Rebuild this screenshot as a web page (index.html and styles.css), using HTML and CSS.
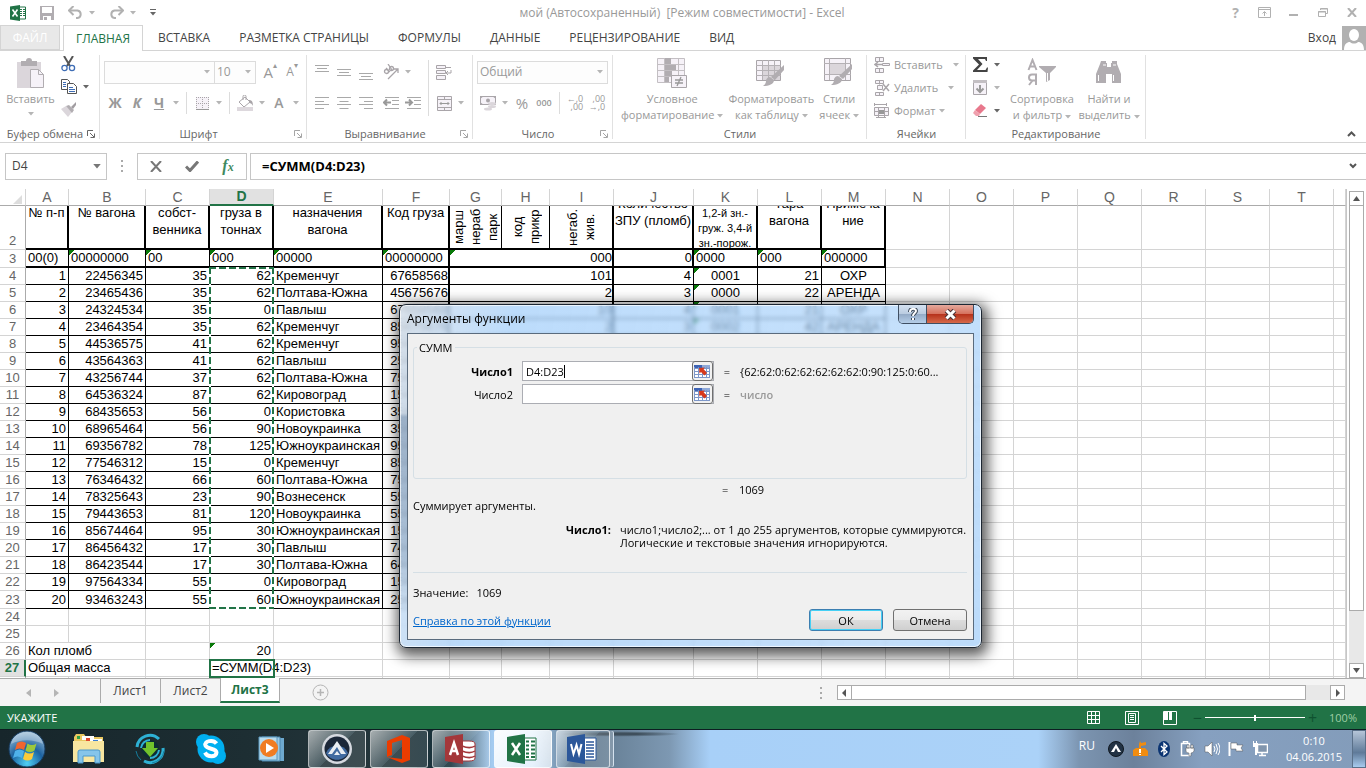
FILE: index.html
```html
<!DOCTYPE html>
<html lang="ru">
  <head>
    <meta charset="utf-8">
    <title>мой - Excel</title>
    <link rel="stylesheet" href="styles.css">
  </head>

  <body>
    <svg class="defs" width="0" height="0" aria-hidden="true">
      <symbol id="arrow" viewBox="0 0 6 4"><path d="M0 0h6L3 3.5z" fill="currentColor"/></symbol>
      <symbol id="launch" viewBox="0 0 8 8"><path d="M.5 6V.5H6M3 3l4 4M7.500 3.500v4h-4" fill="none" stroke="currentColor"/></symbol>
      <symbol id="al-l" viewBox="0 0 14 12"><path d="M0 .5h14M0 4.500h9M0 7.500h14M0 11.500h9" stroke="#a9a9a9"/></symbol>
      <symbol id="al-c" viewBox="0 0 14 12"><path d="M0 .5h14M2.500 4.500h9M0 7.500h14M2.500 11.500h9" stroke="#a9a9a9"/></symbol>
      <symbol id="al-r" viewBox="0 0 14 12"><path d="M0 .5h14M5 4.500h9M0 7.500h14M5 11.500h9" stroke="#a9a9a9"/></symbol>
      <symbol id="ref" viewBox="0 0 17 14">
        <path d="M0 1h16v13H0z" fill="#fff"/>
        <path d="M0 1h8v3H0z" fill="#3d63b5"/>
        <path d="M8 1h8v3H8z" fill="#8fa9d8"/>
        <path d="M0 4.500h16M0 7.500h16M0 10.500h16M0 13.500h16M.5 3v11M4.500 3v11M8.500 3v11M12.500 3v11M15.500 3v11" stroke="#7d97c9"/>
        <path d="M5 4l6-.5-1.500 1.500L13 9l-2.500 2.500L7 8 5.500 9.500z" fill="#d8391c"/>
      </symbol>
      <symbol id="brush" viewBox="0 0 22 22">
        <path d="M21 0v5l-9 10-4-3z" fill="#b1adb1"/>
        <path d="M7 12l4 3c0 4-5 6-11 6 3-2 3-4 3-6 1-2 2-3 4-3z" fill="#b1adb1"/>
      </symbol>
    </svg>

    <div class="window">
      <header class="titlebar">
        <div class="quick">
          <svg width="16" height="16" viewBox="0 0 16 16"><path d="M8 2h7.500v12H8z" fill="#fff" stroke="#217346"/><path d="M10 4.500h2M13 4.500h2M10 6.500h2M13 6.500h2M10 8.500h2M13 8.500h2M10 10.500h2M13 10.500h2" stroke="#217346"/><path d="M0 1.500L10 0v16L0 14.500z" fill="#217346"/><path d="M2.500 4.500l5 7M7.500 4.500l-5 7" stroke="#fff" stroke-width="1.600"/></svg>
          <button aria-label="Сохранить"><svg width="14" height="14" viewBox="0 0 14 14"><path d="M0 0h14v14H0z" fill="#b1adb1"/><path d="M2 1h10v6H2z" fill="#fff"/><path d="M3 10h8v4H3z" fill="#fff"/><path d="M4 11h3v3H4z" fill="#b1adb1"/></svg></button>
          <button class="with-arrow" aria-label="Отменить"><svg width="15" height="13" viewBox="0 0 15 13"><path d="M2 4.500h7.500a3.800 3.800 0 0 1 0 7.500H8" fill="none" stroke="#b1b1b1" stroke-width="2"/><path d="M5.500 0L1 4.500 5.500 9" fill="none" stroke="#b1b1b1" stroke-width="2"/></svg><svg class="ar"><use href="#arrow"/></svg></button>
          <button class="with-arrow" aria-label="Вернуть"><svg width="15" height="13" viewBox="0 0 15 13"><path d="M13 4.500H5.500a3.800 3.800 0 0 0 0 7.500H7" fill="none" stroke="#b1b1b1" stroke-width="2"/><path d="M9.500 0L14 4.500 9.500 9" fill="none" stroke="#b1b1b1" stroke-width="2"/></svg><svg class="ar"><use href="#arrow"/></svg></button>
          <button aria-label="Настройка панели"><svg width="6" height="7" viewBox="0 0 6 7"><path d="M0 .5h6" stroke="#666"/><path d="M0 3h6L3 6.500z" fill="#666"/></svg></button>
        </div>
        <h1>мой (Автосохраненный)  [Режим совместимости] - Excel</h1>
        <div class="caption">
          <button aria-label="Справка"><b>?</b></button>
          <button aria-label="Параметры ленты"><svg width="13" height="11" viewBox="0 0 13 11"><path d="M.5.500h12v10H.5zM.5 2.500h12M6.500 9V5M4.500 6.500l2-2 2 2" fill="none" stroke="#b1b1b1"/></svg></button>
          <button aria-label="Свернуть"><svg width="9" height="9" viewBox="0 0 9 9"><path d="M0 7h9" stroke="#b1b1b1" stroke-width="2"/></svg></button>
          <button aria-label="Восстановить"><svg width="10" height="9" viewBox="0 0 10 9"><path d="M2.500 2V.5h7v5H8M.5 3.500h7v5h-7zM0 4h8M2.500 1h7" fill="none" stroke="#b1b1b1"/></svg></button>
          <button aria-label="Закрыть"><svg width="10" height="9" viewBox="0 0 10 9"><path d="M1 0l8 9M9 0L1 9" stroke="#b1b1b1" stroke-width="2"/></svg></button>
        </div>
      </header>

      <nav class="tabs">
        <button class="file">ФАЙЛ</button>
        <button class="on">ГЛАВНАЯ</button>
        <button>ВСТАВКА</button>
        <button>РАЗМЕТКА СТРАНИЦЫ</button>
        <button>ФОРМУЛЫ</button>
        <button>ДАННЫЕ</button>
        <button>РЕЦЕНЗИРОВАНИЕ</button>
        <button>ВИД</button>
        <a class="login" href="#">Вход
          <svg width="24" height="24" viewBox="0 0 24 24"><path d="M0 0h24v24H0z" fill="#b1b1b1"/><ellipse cx="12" cy="9" rx="5" ry="6" fill="#fff"/><path d="M2 24c0-6 3-8 6-8 2 2 6 2 8 0 3 0 6 2 6 8z" fill="#fff"/></svg>
        </a>
      </nav>

      <section class="ribbon">
        <div class="group g-clip">
          <div class="tools">
            <button class="big">
              <svg width="30" height="30" viewBox="0 0 30 30"><path d="M1 4h24v26H1z" fill="#dbd6db"/><path d="M5 3h5a3 3 0 0 1 6 0h5v5H5z" fill="#b1adb1"/><path d="M14.500 11.500h8l5 5v13h-13z" fill="#f6f2f8" stroke="#b1adb1"/><path d="M22.500 11.500v5h5" fill="none" stroke="#b1adb1"/></svg>
              Вставить
              <svg class="ar"><use href="#arrow"/></svg>
            </button>
            <div class="stack">
              <button aria-label="Вырезать"><svg width="15" height="16" viewBox="0 0 15 16"><path d="M3 0l6 10M12 0L6 10" stroke="#555" stroke-width="2"/><circle cx="3.500" cy="12" r="2.600" fill="none" stroke="#3e6db5" stroke-width="1.300"/><circle cx="11" cy="12" r="2.600" fill="none" stroke="#3e6db5" stroke-width="1.300"/></svg></button>
              <button class="with-arrow dark" aria-label="Копировать"><svg width="16" height="15" viewBox="0 0 16 15"><path d="M.5.500h6l2 2v8h-8z" fill="#fff" stroke="#555"/><path d="M2 3.500h3M2 5.500h3M2 7.500h3" stroke="#3e6db5"/><path d="M6.500 4.500h6l3 3v7h-9z" fill="#fff" stroke="#555"/><path d="M8 8.500h4M8 10.500h6M8 12.500h6" stroke="#3e6db5"/></svg><svg class="ar"><use href="#arrow"/></svg></button>
              <button aria-label="Формат по образцу"><svg width="16" height="15" viewBox="0 0 16 15"><path d="M0 7l5-3 6 6-4 5z" fill="#dbd6db"/><path d="M5 4l3-1 5 5-2 3z" fill="#b1adb1"/><path d="M10 5l5-5v3l-3 4z" fill="#a19da1"/></svg></button>
            </div>
          </div>
          <div class="label"><span>Буфер обмена</span><button class="dark" aria-label="Буфер обмена"><svg width="8" height="8"><use href="#launch"/></svg></button></div>
        </div>

        <div class="group g-font">
          <div class="rows">
            <div class="row">
              <div class="drop name"><select aria-label="Шрифт"><option></option></select><svg class="ar"><use href="#arrow"/></svg></div>
              <div class="drop size"><select aria-label="Размер"><option>10</option></select><svg class="ar"><use href="#arrow"/></svg></div>
              <button class="ib grow">A<sup>▴</sup></button>
              <button class="ib shrink">A<sup>▾</sup></button>
            </div>
            <div class="row">
              <button class="ib bold">Ж</button>
              <button class="ib bold"><i>К</i></button>
              <button class="ib bold"><u>Ч</u></button>
              <button class="dd" aria-label="Подчеркивание"><svg class="ar"><use href="#arrow"/></svg></button>
              <span class="sep"></span>
              <button class="ib" aria-label="Границы"><svg width="13" height="13" viewBox="0 0 13 13"><path d="M0 0h13v13H0z" fill="#f6f2f8"/><path d="M.5 0v12M6.500 0v12M12.500 0v12M0 .5h13M0 6.500h13" stroke="#a9a5a9" stroke-dasharray="1 1"/><path d="M0 12.500h13" stroke="#999"/></svg></button>
              <button class="dd" aria-label="Границы"><svg class="ar"><use href="#arrow"/></svg></button>
              <span class="sep"></span>
              <button class="ib" aria-label="Заливка"><svg width="17" height="16" viewBox="0 0 17 16"><path d="M8 2l5 5-6 5-5-5z" fill="#fff" stroke="#a9a5a9"/><path d="M6 5V1.500a1.500 1.500 0 0 1 3 0V5" fill="none" stroke="#a9a5a9"/><path d="M12 5c3 0 4 2 4 6-1-2-2-3-4-3z" fill="#a9a5a9"/><path d="M0 12h16v4H0z" fill="#ddd8dd"/></svg></button>
              <button class="dd" aria-label="Заливка"><svg class="ar"><use href="#arrow"/></svg></button>
              <button class="ib semi">А</button>
              <button class="dd" aria-label="Цвет"><svg class="ar"><use href="#arrow"/></svg></button>
            </div>
          </div>
          <div class="label"><span>Шрифт</span><button aria-label="Шрифт"><svg width="8" height="8"><use href="#launch"/></svg></button></div>
        </div>

        <div class="group g-align">
          <div class="tools">
            <div class="rows">
              <div class="row">
                <button class="ib" aria-label="По верхнему краю"><svg width="14" height="16" viewBox="0 0 14 16"><path d="M0 1.500h14M2 4.500h10M0 7.500h14" stroke="#a9a9a9"/></svg></button>
                <button class="ib" aria-label="По середине"><svg width="14" height="16" viewBox="0 0 14 16"><path d="M0 5.500h14M2 8.500h10M0 11.500h14" stroke="#a9a9a9"/></svg></button>
                <button class="ib" aria-label="По нижнему краю"><svg width="14" height="16" viewBox="0 0 14 16"><path d="M0 9.500h14M2 12.500h10M0 15.500h14" stroke="#a9a9a9"/></svg></button>
                <button class="ib gap" aria-label="Ориентация"><svg width="17" height="16" viewBox="0 0 17 16"><g fill="none" stroke="#a9a5a9" stroke-width="1.300"><circle cx="3.500" cy="7.500" r="2"/><path d="M3 4l4 4M5 0l4 6"/><circle cx="8.500" cy="4.500" r="2"/><path d="M5 15L15 5M11 5h4v4"/></g></svg></button>
                <button class="dd" aria-label="Ориентация"><svg class="ar"><use href="#arrow"/></svg></button>
              </div>
              <div class="row">
                <button class="ib" aria-label="По левому краю"><svg width="14" height="12"><use href="#al-l"/></svg></button>
                <button class="ib" aria-label="По центру"><svg width="14" height="12"><use href="#al-c"/></svg></button>
                <button class="ib" aria-label="По правому краю"><svg width="14" height="12"><use href="#al-r"/></svg></button>
                <button class="ib gap" aria-label="Уменьшить отступ"><svg width="16" height="12" viewBox="0 0 16 12"><path d="M2 .5h14M9 3.500h7M9 7.500h7M2 11.500h14" stroke="#a9a9a9"/><path d="M8 5.500H1M4 2.500L1 5.500l3 3" fill="none" stroke="#999" stroke-width="2"/></svg></button>
                <button class="ib" aria-label="Увеличить отступ"><svg width="16" height="12" viewBox="0 0 16 12"><path d="M2 .5h14M9 3.500h7M9 7.500h7M2 11.500h14" stroke="#a9a9a9"/><path d="M0 5.500h7M4 2.500l3 3-3 3" fill="none" stroke="#999" stroke-width="2"/></svg></button>
              </div>
            </div>
            <span class="sep tall"></span>
            <div class="rows">
              <div class="row">
                <button class="ib" aria-label="Перенести текст"><svg width="16" height="15" viewBox="0 0 16 15"><path d="M.5.500h9v3h-9zM.5 5.500h9v3h-9zM.5 10.500h9v4h-9z" fill="#f6f2f8" stroke="#a9a5a9"/><path d="M9 2.500h6M15 5v3h-5M12 6l-2 2 2 2" fill="none" stroke="#a9a5a9"/></svg></button>
              </div>
              <div class="row">
                <button class="ib" aria-label="Объединить"><svg width="15" height="15" viewBox="0 0 15 15"><path d="M.5.500h14v14H.5zM.5 3.500h14M.5 11.500h14M7.500 0v4M7.500 11v4" fill="#f6f2f8" stroke="#a9a5a9"/><path d="M3 7.500h9M4.500 6L3 7.500 4.500 9M10.500 6L12 7.500 10.500 9" fill="none" stroke="#999"/></svg></button>
                <button class="dd" aria-label="Объединить"><svg class="ar"><use href="#arrow"/></svg></button>
              </div>
            </div>
          </div>
          <div class="label"><span>Выравнивание</span><button aria-label="Выравнивание"><svg width="8" height="8"><use href="#launch"/></svg></button></div>
        </div>

        <div class="group g-num">
          <div class="rows">
            <div class="row"><div class="drop format"><select aria-label="Числовой формат"><option>Общий</option></select><svg class="ar"><use href="#arrow"/></svg></div></div>
            <div class="row">
              <button class="ib" aria-label="Денежный формат"><svg width="17" height="16" viewBox="0 0 17 16"><path d="M.5 1.500h15v8H.5z" fill="#f6f2f8" stroke="#a9a5a9"/><path d="M0 1h4L0 4zM16 1h-4l4 3zM0 10h4L0 7z" fill="#a9a5a9"/><circle cx="8" cy="5.500" r="2" fill="#a9a5a9"/><ellipse cx="12" cy="8.500" rx="4" ry="1.500" fill="#dbd6db"/><ellipse cx="12" cy="11.500" rx="4" ry="1.500" fill="#dbd6db"/><ellipse cx="8" cy="14" rx="4" ry="1.500" fill="#dbd6db"/></svg></button>
              <button class="dd" aria-label="Денежный формат"><svg class="ar"><use href="#arrow"/></svg></button>
              <button class="ib pct">%</button>
              <button class="ib zeros">000</button>
              <span class="sep"></span>
              <button class="ib digits"><span>←,0<br>,00</span></button>
              <button class="ib digits"><span>,00<br>→,0</span></button>
            </div>
          </div>
          <div class="label"><span>Число</span><button aria-label="Число"><svg width="8" height="8"><use href="#launch"/></svg></button></div>
        </div>

        <div class="group g-styles">
          <div class="tools">
            <button class="big wide">
              <svg width="30" height="30" viewBox="0 0 30 30"><path d="M.5.500h27v24H.5zM.5 6.500h27M.5 12.500h27M.5 18.500h27M7.500 0v25M21.500 0v25" fill="#f6f2f8" stroke="#c3bfc3"/><path d="M8 0h6v6H8zM8 7h11v5H8zM8 13h7v5H8zM8 19h4v5H8z" fill="#b1adb1"/><path d="M14.500 17.500h15v12h-15z" fill="#f6f2f8" stroke="#a9a5a9"/><path d="M18 22h8M18 25h8M24 19l-4 9" stroke="#999" stroke-width="1.300"/></svg>
              Условное<br><span>форматирование <svg class="ar"><use href="#arrow"/></svg></span>
            </button>
            <button class="big">
              <svg width="30" height="30" viewBox="0 0 30 30"><path d="M.5 2.500h24v20H.5z" fill="#f6f2f8" stroke="#a9a5a9"/><path d="M6 8h18v14H6z" fill="#dbd6db"/><path d="M0 7.500h25M0 12.500h25M0 17.500h25M6.500 2v20M12.500 2v20M18.500 2v20" stroke="#b5b1b5"/><use href="#brush" x="7" y="7" width="22" height="22"/></svg>
              Форматировать<br><span>как таблицу <svg class="ar"><use href="#arrow"/></svg></span>
            </button>
            <button class="big">
              <svg width="30" height="30" viewBox="0 0 30 30"><path d="M.5.500h26v22H.5z" fill="#f6f2f8" stroke="#a9a5a9"/><path d="M6 6h15v10H6z" fill="#dbd6db"/><path d="M0 5.500h27M0 16.500h27M5.500 0v22M21.500 0v22" stroke="#b5b1b5"/><use href="#brush" x="7" y="6" width="22" height="22"/></svg>
              Стили<br><span>ячеек <svg class="ar"><use href="#arrow"/></svg></span>
            </button>
          </div>
          <div class="label"><span>Стили</span></div>
        </div>

        <div class="group g-cells">
          <div class="lines">
            <button><svg width="16" height="16" viewBox="0 0 16 16"><path d="M1.500.500h8v4h-8zM5.500.500v4M1.500 11.500h8v4h-8zM5.500 11v4M8.500 6.500h7v2h-7z" fill="#f6f2f8" stroke="#a9a5a9"/><path d="M8 7.500H1M4 5L1 7.500 4 10" fill="none" stroke="#a9a5a9" stroke-width="1.500"/></svg>Вставить<svg class="ar far"><use href="#arrow"/></svg></button>
            <button><svg width="16" height="16" viewBox="0 0 16 16"><path d="M1.500.500h8v3h-8zM5.500.500v4M1.500 12.500h8v3h-8zM5.500 12v4M3.500 5.500h5v4h-5z" fill="#f6f2f8" stroke="#a9a5a9"/><path d="M9 4l6 7M15 4l-6 7" stroke="#a9a5a9" stroke-width="1.500"/></svg>Удалить<svg class="ar far"><use href="#arrow"/></svg></button>
            <button><svg width="16" height="16" viewBox="0 0 16 16"><path d="M.5 0v3M12.500 0v3M1 1.500h11" stroke="#a9a5a9"/><path d="M.5 4.500h14v8H.5zM.5 8.500h14M4.500 4v10M10.500 4v10M2 14.500h10" fill="#f6f2f8" stroke="#a9a5a9"/><path d="M5 7h5v4H5z" fill="#999"/></svg>Формат<svg class="ar"><use href="#arrow"/></svg></button>
          </div>
          <div class="label"><span>Ячейки</span></div>
        </div>

        <div class="group g-edit">
          <div class="tools">
            <div class="lines">
              <button class="dark" aria-label="Автосумма"><svg width="15" height="15" viewBox="0 0 15 15"><path d="M0 0h14v4h-1l-1-2H5l4.500 5L4 13h8.500l1.500-2.500h1L14.500 15H0v-1.500L6 7.500 0 1.500z" fill="#444"/></svg><svg class="ar"><use href="#arrow"/></svg></button>
              <button aria-label="Заполнить"><svg width="15" height="15" viewBox="0 0 15 15"><path d="M.5.500h13v14H.5z" fill="#f6f2f8" stroke="#a9a5a9"/><path d="M0 0h14v3H0z" fill="#c3bfc3"/><path d="M7 5v7M3.500 8.500L7 12l3.500-3.500" fill="none" stroke="#999" stroke-width="2"/></svg><svg class="ar"><use href="#arrow"/></svg></button>
              <button class="dark" aria-label="Очистить"><svg width="15" height="14" viewBox="0 0 15 14"><path d="M8 0l5 4-6 6-5-4z" fill="#e8788c"/><path d="M2 6l5 4-1 2H3L0 9z" fill="#f0a0ae"/><path d="M5 12.500h9" stroke="#777"/></svg><svg class="ar"><use href="#arrow"/></svg></button>
            </div>
            <button class="big sort">
              <svg width="30" height="30" viewBox="0 0 30 30"><path d="M1.500 12L5.500 2 9.500 12M3 8.500h5M9 27V16.500H5a3 3 0 0 0 0 6h4M6 22l-4 5" fill="none" stroke="#b1adb1" stroke-width="2"/><path d="M12 8h17v1l-6 6v7l-4 2v-9l-7-6z" fill="#b1adb1"/><path d="M20 15h1v8h-1z" fill="#fff"/></svg>
              Сортировка<br><span>и фильтр <svg class="ar"><use href="#arrow"/></svg></span>
            </button>
            <button class="big find">
              <svg width="30" height="30" viewBox="0 0 30 30"><path d="M7 3h5v2h1v4h4V5h1V3h5v3l4 10v9h-9v-9h-6v9H2v-9L6 6z" fill="#b1adb1"/><path d="M4.500 17v6M19.500 17v6M9 7h3M19 7h3" stroke="#fff"/></svg>
              Найти и<br><span>выделить <svg class="ar"><use href="#arrow"/></svg></span>
            </button>
          </div>
          <div class="label"><span>Редактирование</span></div>
        </div>

        <button class="collapse" aria-label="Свернуть ленту"><svg width="9" height="6" viewBox="0 0 9 6"><path d="M1 5l3.500-3.500L8 5" fill="none" stroke="#555" stroke-width="2"/></svg></button>
      </section>

      <section class="formula">
        <div class="namebox"><input aria-label="Имя" value="D4"><svg class="ar"><use href="#arrow"/></svg></div>
        <span class="dots"></span>
        <div class="fx">
          <button aria-label="Отмена"><svg width="12" height="11" viewBox="0 0 12 11"><path d="M1 0l10 11M11 0L1 11" stroke="#777" stroke-width="2"/></svg></button>
          <button aria-label="Ввод"><svg width="14" height="11" viewBox="0 0 14 11"><path d="M1 5.500L5 9.500 13 .5" fill="none" stroke="#777" stroke-width="3"/></svg></button>
          <button aria-label="Вставить функцию"><em>f<small>x</small></em></button>
        </div>
        <div class="bar"><input aria-label="Формула" value="=СУММ(D4:D23)"><button aria-label="Развернуть"><svg width="8" height="6" viewBox="0 0 8 6"><path d="M1 1l3 3 3-3" fill="none" stroke="#555" stroke-width="2"/></svg></button></div>
      </section>

      <main class="sheet">
        <div class="cells-area">
          <table id="grid"></table>
        </div>
        <div class="vscroll">
          <button aria-label="Вверх"><svg width="7" height="5" viewBox="0 0 7 5"><path d="M0 5h7L3.500 0z" fill="#555"/></svg></button>
          <span class="thumb"></span>
          <span class="rail"></span>
          <button aria-label="Вниз"><svg width="7" height="5" viewBox="0 0 7 5"><path d="M0 0h7L3.500 5z" fill="#555"/></svg></button>
        </div>
      </main>

      <div class="sheets">
        <div class="nav">
          <button aria-label="Назад"><svg width="5" height="8" viewBox="0 0 5 8"><path d="M5 0v8L0 4z" fill="#b5b5b5"/></svg></button>
          <button aria-label="Вперед"><svg width="5" height="8" viewBox="0 0 5 8"><path d="M0 0v8l5-4z" fill="#b5b5b5"/></svg></button>
        </div>
        <button class="tab">Лист1</button>
        <button class="tab">Лист2</button>
        <button class="tab on">Лист3</button>
        <button class="add" aria-label="Новый лист"><svg width="17" height="17" viewBox="0 0 17 17"><circle cx="8.500" cy="8.500" r="7.500" fill="none" stroke="#b5b5b5"/><path d="M8.500 5v7M5 8.500h7" stroke="#b5b5b5" stroke-width="1.500"/></svg></button>
        <div class="hscroll">
          <span class="dots"></span>
          <button aria-label="Влево"><svg width="4" height="8" viewBox="0 0 4 8"><path d="M4 0v8L0 4z" fill="#555"/></svg></button>
          <span class="thumb"></span>
          <span class="rail"></span>
          <button aria-label="Вправо"><svg width="4" height="8" viewBox="0 0 4 8"><path d="M0 0v8l4-4z" fill="#555"/></svg></button>
        </div>
      </div>

      <footer class="status">
        <span class="mode">УКАЖИТЕ</span>
        <button aria-label="Обычный"><svg width="14" height="14" viewBox="0 0 14 14"><path d="M.5.500h12v12H.5zM4.500 0v13M8.500 0v13M0 4.500h13M0 8.500h13" fill="none" stroke="#fff"/></svg></button>
        <button aria-label="Разметка страницы"><svg width="14" height="14" viewBox="0 0 14 14"><path d="M.5.500h13v13H.5zM3.500 2.500h7v9h-7zM5 4.500h4M5 6.500h4M5 8.500h4" fill="none" stroke="#fff"/></svg></button>
        <button aria-label="Страничный режим"><svg width="14" height="14" viewBox="0 0 14 14"><path d="M.5.500h13v13H.5z" fill="none" stroke="#fff"/><path d="M1 1h4v8H1zM6 1h3v8H6z" fill="#fff"/></svg></button>
        <div class="zoom"><span>−</span><input type="range" aria-label="Масштаб" min="0" max="200" value="101"><span>+</span></div>
        <span class="percent">100%</span>
      </footer>
    </div>

    <div class="dialog" role="dialog" aria-labelledby="dlg-title">
      <div class="dlg-head">
        <h2 id="dlg-title">Аргументы функции</h2>
        <div class="dlg-caption">
          <button aria-label="Справка"><svg width="10" height="13" viewBox="0 0 10 13"><path d="M2 4c0-4 6-4 6-1 0 2-3 2-3 5M5 10v2" fill="none" stroke="#3b4858" stroke-width="4"/><path d="M2 4c0-4 6-4 6-1 0 2-3 2-3 5M5 10v2" fill="none" stroke="#fff" stroke-width="2"/></svg></button>
          <button class="x" aria-label="Закрыть"><svg width="13" height="11" viewBox="0 0 13 11"><path d="M2.500 1.500l8 8M10.500 1.500l-8 8" stroke="#4a3035" stroke-width="5"/><path d="M2.500 1.500l8 8M10.500 1.500l-8 8" stroke="#fff" stroke-width="3"/></svg></button>
        </div>
      </div>
      <form class="dlg-body">
        <fieldset>
          <legend>СУММ</legend>
          <label for="n1"><b>Число1</b></label>
          <div class="refbox"><input id="n1" value="D4:D23"><i class="caret"></i><button type="button" aria-label="Выбрать диапазон"><svg width="17" height="14"><use href="#ref"/></svg></button></div>
          <span>=</span><output>{62:62:0:62:62:62:62:62:0:90:125:0:60...</output>
          <label for="n2">Число2</label>
          <div class="refbox"><input id="n2"><button type="button" aria-label="Выбрать диапазон"><svg width="17" height="14"><use href="#ref"/></svg></button></div>
          <span>=</span><output class="hint">число</output>
        </fieldset>
        <p class="total"><span>=</span>1069</p>
        <p class="about">Суммирует аргументы.</p>
        <dl>
          <dt>Число1:</dt>
          <dd>число1;число2;... от 1 до 255 аргументов, которые суммируются.<br>Логические и текстовые значения игнорируются.</dd>
        </dl>
        <hr>
        <p class="value"><span>Значение:</span>1069</p>
        <div class="dlg-foot">
          <a href="#">Справка по этой функции</a>
          <button type="button" class="ok">ОК</button>
          <button type="button">Отмена</button>
        </div>
      </form>
    </div>

    <div class="taskbar">
      <button class="start" aria-label="Пуск"><svg width="40" height="38" viewBox="0 0 40 38"><defs><radialGradient id="orb" cx=".5" cy=".9" r=".9"><stop offset="0" stop-color="#4fd0f5"/><stop offset=".5" stop-color="#1c62a0"/><stop offset="1" stop-color="#9fc0d8"/></radialGradient></defs><circle cx="20" cy="19" r="18" fill="url(#orb)" stroke="#16395c"/><path d="M10 13c3-2 6-2 9 0l-2 7c-3-2-6-2-9 0z" fill="#f0652f"/><path d="M20.500 13.500c3 2 6 2 9 0l-2 7c-3 2-6 2-9 0z" fill="#9cc83c"/><path d="M8 21c3-2 6-2 9 0l-2 7c-3-2-6-2-9 0z" fill="#4fb1ea"/><path d="M18 22c3 2 6 2 9 0l-2 7c-3 2-6 2-9 0z" fill="#fccb3a"/><path d="M4 14c3-16 29-16 32 0-10-5-22-5-32 0z" fill="#fff" opacity=".3"/></svg></button>
      <button class="pin" aria-label="Проводник"><svg width="34" height="32" viewBox="0 0 34 32"><path d="M2 4l2-3h8l2 3h17v24H2z" fill="#e9c760"/><path d="M10 3h12v4H10zM18 6h12v4H18z" fill="#fff"/><path d="M5 3h3v3H5z" fill="#2fa046"/><path d="M14 5h4v3h-4z" fill="#e0482e"/><path d="M21 7h5v3h-5z" fill="#3b7dd0"/><path d="M1 8h31v21H1z" fill="#f8e6a0"/><path d="M6 30V19q0-2 2-2h18q2 0 2 2v11h-5v-7H11v7z" fill="#86c5ea" stroke="#4a98cc"/></svg></button>
      <button class="pin" aria-label="Загрузки"><svg width="32" height="32" viewBox="0 0 32 32"><circle cx="16" cy="16" r="9" fill="#0c2c33"/><g fill="none" stroke="#2eb1d5" stroke-width="3"><path d="M3 14A13 13 0 0 1 25 6M29 15A13 13 0 0 1 10 28"/><path d="M7 15a9 9 0 0 1 9-8M25 17a9 9 0 0 1-9 8" stroke-width="2"/><path d="M2 18a14 14 0 0 0 5 9M30 18a14 14 0 0 1-12 12" stroke="#157d9d" stroke-width="1"/></g><path d="M12 9h8v6h4l-8 9-8-9h4z" fill="#71c22c"/></svg></button>
      <button class="pin" aria-label="Skype"><svg width="32" height="32" viewBox="0 0 32 32"><circle cx="9" cy="9" r="8" fill="#00aff0"/><circle cx="23" cy="23" r="8" fill="#00aff0"/><circle cx="16" cy="16" r="13.500" fill="#00aff0"/><path d="M21.500 10.500C18 6 9 8 10.500 12.500c1.500 4 11 2.500 11 7 0 5-9 5-11.500 0" fill="none" stroke="#fff" stroke-width="4"/></svg></button>
      <button class="pin" aria-label="Проигрыватель"><svg width="28" height="26" viewBox="0 0 28 26"><path d="M8 2h18v23H8z" fill="#6ea9cf"/><path d="M4 1h18v24H4z" fill="#9cc9e4" stroke="#4a88b0"/><path d="M1 1h18v23H1z" fill="#b9dcee" stroke="#5a98be"/><circle cx="11" cy="12" r="9" fill="#f07c22"/><path d="M8 7l8 5-8 5z" fill="#fff"/></svg></button>
      <button class="app" aria-label="AIMP"><svg width="32" height="32" viewBox="0 0 32 32"><circle cx="16" cy="16" r="15" fill="#d6dae0"/><circle cx="16" cy="16" r="12.500" fill="#1b2738"/><path d="M5 20a12 12 0 0 1 22 0c-4 9-18 9-22 0z" fill="#406aa0"/><path d="M7 21l9-13 9 13h-5l-4-7-5 7zM13 22l3-4 3 4z" fill="#e9edf2"/></svg></button>
      <button class="app" aria-label="Office"><svg width="24" height="30" viewBox="0 0 24 30"><path d="M0 7L15 1l8 3v22l-8 3-15-6 15 2V6L5 9v12l-5 2z" fill="#eb3c00"/></svg></button>
      <button class="app" aria-label="Access"><svg width="32" height="32" viewBox="0 0 32 32"><path d="M16 8h8q6 0 6 3v14q0 3-6 3h-8z" fill="#fff" stroke="#a4373a"/><path d="M17 13c5 2 10 2 13 0M17 18c5 2 10 2 13 0M17 23c5 2 10 2 13 0" fill="none" stroke="#a4373a" stroke-width="1.500"/><path d="M0 4l18-3v30L0 28z" fill="#a4373a"/><path d="M5 22l4-12 4 12M6.500 18h5" fill="none" stroke="#fff" stroke-width="2.500"/></svg></button>
      <button class="app lit" aria-label="Excel"><svg width="32" height="32" viewBox="0 0 32 32"><path d="M16 5h13v22H16z" fill="#fff" stroke="#217346"/><path d="M19 8.500h3M24 8.500h4M19 12.500h3M24 12.500h4M19 16.500h3M24 16.500h4M19 20.500h3M24 20.500h4M19 24h3M24 24h4" stroke="#217346" stroke-width="2"/><path d="M0 4l18-3v30L0 28z" fill="#217346"/><path d="M5 10l8 12M13 10L5 22" stroke="#fff" stroke-width="2.500"/></svg></button>
      <button class="app pile" aria-label="Word"><svg width="32" height="32" viewBox="0 0 32 32"><path d="M16 5h13v22H16z" fill="#fff" stroke="#2b579a"/><path d="M19 9h8M19 12h8M19 15h8M19 18h8M19 21h8M19 24h8" stroke="#2b579a" stroke-width="1.500"/><path d="M0 4l18-3v30L0 28z" fill="#2b579a"/><path d="M4 11l2.500 10L9.500 12l2.500 9 2.500-10" fill="none" stroke="#fff" stroke-width="2"/></svg></button>
      <div class="tray">
        <span class="lang">RU</span>
        <svg width="16" height="16" viewBox="0 0 16 16"><circle cx="8" cy="8" r="7.500" fill="#223244" stroke="#101820"/><path d="M3 11l5-8 5 8h-3L8 7l-2 4z" fill="#fff"/></svg>
        <svg width="16" height="16" viewBox="0 0 16 16"><path d="M1 15V9l3-2h3V3l1-3 1 2 5-1v3L9 5v2h4l3 3v5z" fill="#f08c10"/><path d="M7 8h2v4H7zM7 13h2v1H7z" fill="#fff"/></svg>
        <svg width="16" height="16" viewBox="0 0 16 16"><ellipse cx="8" cy="8" rx="6" ry="8" fill="#0b3472"/><path d="M5 5l6 6-3 2.500v-11L11 5l-6 6" fill="none" stroke="#fff" stroke-width="1.300"/></svg>
        <svg width="16" height="16" viewBox="0 0 16 16"><path d="M1.500 2.500h8v12h-8zM3.500.500h4v2h-4z" fill="none" stroke="#fff" stroke-width="1.500"/><path d="M6 7h8v3q-1 2-3 2v3H9v-3q-3 0-3-2zM7 4h2v3H7zM11 4h2v3h-2z" fill="#fff" stroke="#555" stroke-width=".5"/></svg>
        <svg width="16" height="16" viewBox="0 0 16 16"><path d="M1 5h3l4-4v14l-4-4H1z" fill="#fff" stroke="#555" stroke-width=".5"/><path d="M10 5q2 3 0 6M12 3q3 5 0 10M14 2q4 6 0 12" fill="none" stroke="#fff"/></svg>
        <svg width="16" height="16" viewBox="0 0 16 16"><path d="M1.500 1v14" stroke="#fff" stroke-width="2"/><path d="M3 2h6v2h6l-2 3 2 3H8V8H3z" fill="#fff" stroke="#555" stroke-width=".5"/></svg>
        <svg width="16" height="16" viewBox="0 0 16 16"><path d="M5.500 3.500h10v8h-10zM7 14.500h7M10 12v2" fill="#8196ae" stroke="#fff" stroke-width="1.500"/><path d="M1 2h5v4H5v8H3V6H1zM1 0h1v2H1zM4 0h1v2H4z" fill="#fff"/></svg>
        <time>0:10<br>04.06.2015</time>
      </div>
      <button class="desktop" aria-label="Свернуть все окна"></button>
    </div>

    <script src="sheet.js"></script>
  </body>
</html>
```
FILE: styles.css
```css
* {
  box-sizing: border-box;
}
body {
  margin: 0;
  height: 100vh;
  display: flex;
  flex-direction: column;
  position: relative;
  overflow: hidden;
  background: #fff;
  color: #444;
  font: 12px/16px "Open Sans", "Noto Sans", sans-serif;
}
button, input, select {
  font: inherit;
  color: inherit;
  background: none;
  border: 0;
  padding: 0;
  margin: 0;
  border-radius: 0;
  outline: 0;
}
button {
  display: flex;
  align-items: center;
  justify-content: center;
}
svg {
  flex: none;
}
.defs {
  position: absolute;
}
.ar {
  width: 6px;
  height: 4px;
  color: #b5b5b5;
}
.dark .ar, .dark {
  color: #666;
}
.window {
  flex: 1;
  display: flex;
  flex-direction: column;
  min-height: 0;
}

/* title bar */
.titlebar {
  height: 25px;
  display: flex;
  align-items: center;
}
.quick {
  display: flex;
  align-items: center;
  gap: 14px;
  padding-left: 10px;
  width: 260px;
}
.with-arrow {
  gap: 6px;
}
h1 {
  flex: 1;
  margin: 0;
  font-size: 12px;
  font-weight: 400;
  color: #999;
  text-align: center;
  white-space: pre;
}
.caption {
  width: 262px;
  display: flex;
  justify-content: flex-end;
  color: #b1b1b1;
  font-size: 14px;
}
.caption button {
  width: 29px;
  height: 20px;
}

/* ribbon tabs */
.tabs {
  display: flex;
  height: 26px;
  border-bottom: 1px solid #d4d4d4;
}
.tabs button {
  padding: 0 14px;
  margin-right: 1px;
}
.tabs .file {
  width: 60px;
  margin-right: 3px;
  background: #e8e8e8;
  border: 1px solid #d4d4d4;
  color: #fff;
}
.tabs .on {
  width: 80px;
  height: 26px;
  padding: 0;
  background: #fff;
  border: 1px solid #d4d4d4;
  border-bottom: 0;
  color: #217346;
}
.login {
  margin-left: auto;
  display: flex;
  align-items: center;
  gap: 6px;
  color: #444;
  text-decoration: none;
}

/* ribbon */
.ribbon {
  display: flex;
  height: 92px;
  border-bottom: 1px solid #d4d4d4;
  color: #999;
}
.group {
  display: flex;
  flex-direction: column;
  justify-content: space-between;
  padding: 0 4px;
  background: linear-gradient(#e1e1e1, #e1e1e1) right 4px / 1px 84px no-repeat;
}
.g-clip { width: 100px; }
.g-font { width: 207px; }
.g-align { width: 166px; }
.g-num { width: 140px; }
.g-styles { width: 254px; }
.g-cells { width: 99px; }
.g-edit { width: 180px; }
.label {
  display: flex;
  align-items: center;
  height: 16px;
  color: #666;
  font-size: 11px;
  white-space: nowrap;
}
.label span {
  flex: 1;
  text-align: center;
}
.label button {
  width: 10px;
  color: #a5a5a5;
}
.label .dark {
  color: #666;
}
.tools {
  display: flex;
}
.rows {
  padding-top: 10px;
  display: flex;
  flex-direction: column;
  gap: 9px;
}
.row {
  display: flex;
  align-items: center;
  height: 22px;
}
.ib {
  width: 22px;
  height: 22px;
}
.dd {
  width: 12px;
  height: 22px;
}
.gap {
  margin-left: 3px;
}
.sep {
  width: 1px;
  height: 22px;
  margin: 0 4px;
  background: #dcdcdc;
}
.tall {
  height: 56px;
  margin-top: 9px;
}
.g-align .rows:first-child {
  width: 113px;
}
.drop {
  position: relative;
  height: 23px;
  border: 1px solid #dcdcdc;
  background: #fdfdfd;
  display: flex;
  align-items: center;
}
.drop select {
  appearance: none;
  flex: 1;
  width: 100%;
  height: 100%;
  padding-left: 2px;
}
.drop .ar {
  position: absolute;
  right: 4px;
  pointer-events: none;
}
.name { width: 112px; }
.size { width: 43px; margin-left: -1px; }
.format { width: 131px; }
.grow {
  margin-left: 3px;
  font-size: 15px;
}
.shrink {
  font-size: 12px;
}
sup {
  font-size: 8px;
  line-height: 8px;
  align-self: flex-start;
}
.bold {
  font-size: 14px;
  font-weight: 700;
}
.semi {
  font-size: 14px;
  font-weight: 600;
}
.pct {
  font-size: 15px;
}
.zeros {
  font-size: 9px;
  font-weight: 600;
}
.digits {
  font-size: 9px;
  line-height: 8px;
  text-align: right;
}
.big {
  flex-direction: column;
  justify-content: flex-start;
  padding-top: 7px;
  text-align: center;
  white-space: nowrap;
}
.big, .lines {
  font-size: 11px;
}
.big > svg:first-child {
  margin-bottom: 3px;
}
.big br {
  display: none;
}
.g-clip .tools {
  margin-left: -4px;
}
.g-clip .big {
  width: 61px;
}
.g-clip .big .ar {
  margin-top: 5px;
}
.stack {
  display: flex;
  flex-direction: column;
  padding-top: 1px;
}
.stack button {
  height: 23px;
  justify-content: flex-start;
}
.g-styles .tools {
  justify-content: space-between;
  padding: 0 4px;
}
.g-styles .big .ar {
  vertical-align: middle;
}
.lines {
  display: flex;
  flex-direction: column;
  padding: 2px 0 0 3px;
}
.lines button {
  height: 23px;
  gap: 4px;
  justify-content: flex-start;
}
.lines .far {
  margin-left: 6px;
}
.g-edit .lines {
  width: 38px;
}
.g-edit .lines button {
  gap: 6px;
}
.g-edit .sort {
  width: 68px;
}
.g-edit .find {
  width: 66px;
}
.collapse {
  margin: auto 8px 0 auto;
  width: 14px;
  height: 16px;
}

/* formula bar */
.formula {
  display: flex;
  align-items: center;
  height: 46px;
  padding: 0 0 0 5px;
}
.namebox, .fx, .bar {
  height: 27px;
  border: 1px solid #c6c6c6;
  display: flex;
  align-items: center;
}
.namebox {
  width: 102px;
  padding: 0 5px 0 6px;
}
.namebox input {
  flex: 1;
  min-width: 0;
}
.namebox .ar {
  width: 8px;
  height: 5px;
  color: #777;
}
.dots {
  width: 2px;
  height: 12px;
  background: repeating-linear-gradient(#aaa 0 2px, transparent 2px 5px);
}
.formula .dots {
  margin: 0 14px;
}
.fx {
  width: 110px;
}
.fx button {
  flex: 1;
}
.fx em {
  font: italic 700 16px "Liberation Serif", serif;
  color: #3f8a5f;
}
.fx small {
  font-size: 12px;
}
.bar {
  flex: 1;
  margin-left: 3px;
  padding-left: 11px;
  border-right: 0;
}
.bar input {
  flex: 1;
  font-size: 13px;
  font-weight: 700;
  color: #000;
}
.bar button {
  width: 27px;
}

/* sheet */
.sheet {
  flex: 1;
  min-height: 0;
  display: flex;
}
.cells-area {
  flex: 1;
  min-width: 0;
  overflow: hidden;
  border-right: 1px solid #c6c6c6;
}
#grid {
  table-layout: fixed;
  width: 100%;
  border-spacing: 0;
  font: 13px/16px "Liberation Sans", Arial, sans-serif;
  color: #000;
}
#grid th, #grid td {
  height: 17px;
  padding: 0 2px;
  overflow: hidden;
  white-space: nowrap;
  border-right: 1px solid #d4d4d4;
  border-bottom: 1px solid #d4d4d4;
}
#grid th {
  font-weight: 400;
  color: #666;
  font-size: 14px;
  padding: 0;
  text-align: center;
}
#grid thead th {
  line-height: 15px;
  border-bottom-color: #ababab;
}
#grid thead .sel {
  background: #e1e1e1;
  border-bottom: 2px solid #217346;
}
#grid .sel {
  color: #217346;
  font-weight: 700;
}
#grid tbody th {
  font-size: 13px;
  vertical-align: bottom;
  border-right-color: #ababab;
}
#grid tbody .sel {
  background: #e1e1e1;
  border-right: 2px solid #217346;
}
.corner svg {
  display: block;
  margin: 4px 3px 0 auto;
}
#grid .k {
  border-color: #000;
}
#grid .r2 {
  border-right: 2px solid #000;
}
#grid .b2 {
  border-bottom: 2px solid #000;
}
#grid .num {
  text-align: right;
}
#grid .r2.num {
  padding-right: 0;
}
#grid .mid {
  text-align: center;
}
#grid .err {
  background: linear-gradient(135deg, #0a7a0a 4px, transparent 4px) no-repeat;
}
#grid .head {
  height: 44px;
  padding: 0;
  text-align: center;
  vertical-align: top;
}
.clip {
  height: 42px;
  overflow: hidden;
  line-height: 17px;
}
.clip div {
  margin-top: -2px;
}
.clip .up {
  margin-top: -11px;
}
.clip .small {
  margin-top: 0;
  font-size: 11px;
  line-height: 15px;
}
.clip .turn {
  margin: 0 auto;
  height: 42px;
  writing-mode: vertical-rl;
  transform: rotate(180deg);
}
#grid .row3 td {
  height: 18px;
}
#grid .last td {
  height: 18px;
}
#grid .first-sel {
  position: relative;
  overflow: visible;
}
.ants {
  position: absolute;
  z-index: 1;
  top: -1px;
  left: -1px;
  right: -1px;
  height: 342px;
  background:
    repeating-linear-gradient(90deg, #217346 0 7px, #fff 7px 10px) top / 100% 2px no-repeat,
    repeating-linear-gradient(90deg, #217346 0 7px, #fff 7px 10px) bottom / 100% 2px no-repeat,
    repeating-linear-gradient(#217346 0 7px, #fff 7px 10px) left / 2px 100% no-repeat,
    repeating-linear-gradient(#217346 0 7px, #fff 7px 10px) right / 2px 100% no-repeat;
}
#grid .edit {
  overflow: visible;
  position: relative;
  outline: 2px solid #217346;
  outline-offset: -1px;
}
.vscroll {
  width: 19px;
  padding: 2px 0 0 2px;
  display: flex;
  flex-direction: column;
}
.vscroll button, .hscroll button {
  width: 15px;
  height: 15px;
  border: 1px solid #ababab;
  background: #fff;
}
.vscroll .thumb {
  width: 15px;
  flex: 1;
  border: 1px solid #ababab;
  border-top: 0;
  background: #fff;
}
.vscroll .rail {
  width: 15px;
  height: 52px;
  background: #e8e8e8;
}

/* sheet tabs */
.sheets {
  height: 28px;
  display: flex;
  background: #f4f4f4;
  border-top: 1px solid #ababab;
}
.nav {
  width: 100px;
  display: flex;
  align-items: center;
  padding-left: 26px;
  gap: 23px;
}
.tab {
  width: 60px;
  height: 24px;
  border-left: 1px solid #ababab;
}
.tab.on {
  height: 25px;
  margin-top: -1px;
  background: #fff;
  border-right: 1px solid #ababab;
  border-bottom: 2px solid #217346;
  color: #217346;
  font-weight: 700;
}
.add {
  margin-left: 32px;
}
.hscroll {
  margin-left: auto;
  width: 40%;
  display: flex;
  align-items: center;
  padding-right: 21px;
}
.hscroll .dots {
  margin-right: 15px;
}
.hscroll .thumb {
  flex: 1;
  height: 15px;
  border: 1px solid #ababab;
  border-left: 0;
  background: #fff;
}
.hscroll .rail {
  width: 24px;
  height: 15px;
  background: #e8e8e8;
}
.status {
  height: 23px;
  display: flex;
  align-items: center;
  gap: 24px;
  padding: 0 9px 0 7px;
  background: #217346;
  color: #fff;
  font-size: 11px;
}
.mode {
  margin-right: auto;
}
.zoom {
  display: flex;
  align-items: center;
  gap: 3px;
  margin-left: -8px;
  color: #0f5230;
  font-size: 16px;
}
.zoom input {
  appearance: none;
  width: 100px;
  height: 10px;
  background: linear-gradient(#fff, #fff) center / 100% 1px no-repeat;
}
.zoom input::-webkit-slider-thumb {
  appearance: none;
  width: 2px;
  height: 6px;
  background: #fff;
}
.percent {
  margin-left: -12px;
  color: #9fcfa5;
}

/* function arguments */
.dialog {
  position: absolute;
  left: 399px;
  top: 304px;
  width: 583px;
  padding: 0 7px 7px;
  border: 1px solid #1d2733;
  border-radius: 7px;
  background:
    linear-gradient(transparent 108px, rgba(60, 95, 135, .35) 112px, rgba(60, 95, 135, .2) 250px, transparent 290px) left / 8px 100% no-repeat,
    linear-gradient(100deg, rgba(215, 225, 236, .85), rgba(160, 205, 250, .7) 18%, rgba(160, 205, 250, .6) 85%, rgba(180, 215, 250, .9));
  backdrop-filter: blur(2px);
  box-shadow: inset 0 0 0 1px rgba(255, 255, 255, .7), 2px 4px 14px 4px rgba(0, 0, 0, .65);
  color: #000;
  font-size: 11px;
  line-height: 13px;
}
.dlg-head {
  height: 28px;
  display: flex;
  justify-content: space-between;
}
h2 {
  margin: 0;
  font-size: 12px;
  line-height: 28px;
  font-weight: 400;
}
.dlg-caption {
  display: flex;
  height: 19px;
  border: 1px solid #3f4f63;
  border-top: 0;
  border-radius: 0 0 5px 5px;
  overflow: hidden;
}
.dlg-caption button {
  width: 27px;
  background: linear-gradient(#d5e2f1, #b9cbe0 50%, #93aac6 50%, #b5cee8);
}
.dlg-caption .x {
  width: 47px;
  border-left: 1px solid #3f4f63;
  background: linear-gradient(#e5a99d, #d5705c 50%, #b5301a 50%, #d6694a);
}
.dlg-body {
  height: 307px;
  padding: 7px 6px 0 5px;
  background: #f0f0f0;
  border: 1px solid #5a6b7d;
}
fieldset {
  height: 138px;
  margin: 0;
  padding: 7px 0 0 0;
  border: 1px solid #d5dfe5;
  border-radius: 3px;
  display: grid;
  grid-template-columns: 99px 192px 8px 1fr;
  grid-auto-rows: 20px;
  gap: 3px 9px;
  align-items: center;
}
legend {
  padding: 0 2px;
  margin-left: 3px;
}
fieldset label {
  text-align: right;
}
fieldset span {
  text-align: center;
}
fieldset span, output {
  color: #000;
}
.refbox {
  display: flex;
  align-items: center;
  height: 20px;
  background: #fff;
  border: 1px solid #abadb3;
  position: relative;
}
.refbox input {
  flex: 1;
  min-width: 0;
  padding-left: 3px;
}
.caret {
  position: absolute;
  left: 41px;
  width: 1px;
  height: 13px;
  background: #000;
}
.refbox button {
  width: 21px;
  height: 20px;
  border: 1px solid #707070;
  border-radius: 3px;
  background: #f2f2f2;
}
.hint {
  color: #999;
  font-weight: 600;
}
.dlg-body p {
  margin: 0;
}
.total {
  padding: 4px 0 0 309px;
}
.total span {
  display: inline-block;
  width: 17px;
}
.dlg-body .about {
  margin-top: 3px;
}
dl {
  display: grid;
  grid-template-columns: 198px 1fr;
  gap: 9px;
  margin: 11px 0 23px;
  white-space: nowrap;
}
dt {
  font-weight: 700;
  text-align: right;
}
dd {
  margin: 0;
}
hr {
  margin: 0 0 13px;
  border: 0;
  border-top: 1px solid #d5dfe5;
}
.value span {
  margin-right: 8px;
}
.dlg-foot {
  display: flex;
  align-items: center;
  gap: 10px;
  margin-top: 10px;
}
.dlg-foot a {
  margin-right: auto;
  color: #0066cc;
}
.dlg-foot button {
  width: 74px;
  height: 22px;
  border: 1px solid #707070;
  border-radius: 3px;
  background: linear-gradient(#f2f2f2, #ebebeb 50%, #ddd 50%, #cfcfcf);
}
.dlg-foot .ok {
  border-color: #3c7fb1;
  box-shadow: inset 0 0 0 1px #45d0f5;
}

/* taskbar */
.taskbar {
  height: 39px;
  display: flex;
  align-items: stretch;
  border-top: 1px solid #0d1d22;
  background:
    radial-gradient(ellipse at 620px 4px, #3f4f5c 0 20px, rgba(90, 110, 130, 0) 60px),
    linear-gradient(90deg, #17262b, #1d2e33 18%, #24363b 28%, #16303a 33%, #a4cbf0 36%, #a9cff5 39%, #5c7488 42%, #7d98b2 49%, #a8d0f8 52%, #abd2f8 76%, #7c95b1 79%, #6c819b 83%, #86a0c0 88%, #839cba);
}
.start {
  width: 54px;
}
.pin {
  width: 61px;
  padding-left: 8px;
}
.app {
  width: 58px;
  margin-right: 4px;
  border: 1px solid rgba(255, 255, 255, .6);
  border-radius: 3px;
  background: linear-gradient(135deg, rgba(255, 255, 255, .6), rgba(200, 220, 230, .25) 50%, rgba(255, 255, 255, .12) 50%);
}
.pin + .app {
  margin-left: 10px;
}
.lit {
  background: linear-gradient(135deg, rgba(255, 255, 255, .95), rgba(255, 255, 255, .65));
}
.pile {
  width: 54px;
  box-shadow: 4px 0 0 -1px #8498aa, 5px 0 0 -1px #d5e2ee;
}
.tray {
  margin-left: auto;
  display: flex;
  align-items: center;
  gap: 8px;
  color: #fff;
}
.lang {
  margin: 0 5px 6px 0;
}
time {
  width: 76px;
  text-align: center;
  font-size: 11px;
}
.desktop {
  width: 14px;
  border: 1px solid #5a7089;
  background: linear-gradient(#b5c5d8, #5f7a99 60%, #a8cbee);
}
```
FILE: sheet.js
```js
// [letter, width]
const cols = [
  ['A', 43], ['B', 77], ['C', 64], ['D', 64], ['E', 109], ['F', 67],
  ['G', 52], ['H', 48], ['I', 64], ['J', 80], ['K', 64], ['L', 64],
  ['M', 64], ['N', 64], ['O', 64], ['P', 64], ['Q', 64], ['R', 64],
  ['S', 64], ['T', 64],
];

const heads = [
  ['№ п-п'], ['№ вагона'], ['собст-<br>венника'], ['груза в<br>тоннах'],
  ['назначения<br>вагона'], ['Код груза'],
  ['марш<br>нераб<br>парк', 'turn'], ['код<br>прикр', 'turn'],
  ['негаб.<br>жив.', 'turn'], ['Количество<br>ЗПУ (пломб)', 'up'],
  ['1,2-й зн.-<br>груж. 3,4-й<br>зн.-порож.', 'small'],
  ['Тара<br>вагона', 'up'], ['Примеча<br>ние', 'up'],
];

const rows = [
  [22456345, 35, 62, 'Кременчуг', 67658568, 101, 4, '0001', 21, 'ОХР'],
  [23465436, 35, 62, 'Полтава-Южна', 45675676, 2, 3, '0000', 22, 'АРЕНДА'],
  [24324534, 35, 0, 'Павлыш', 67658568, 10, 4, '0001', 21, 'ОХР'],
  [23464354, 35, 62, 'Кременчуг', 85675676, 2, 3, '0002', 42, 'АРЕНДА'],
  [44536575, 41, 62, 'Кременчуг', 95675676],
  [43564363, 41, 62, 'Павлыш', 25675676],
  [43256744, 37, 62, 'Полтава-Южна', 75675676],
  [64536324, 87, 62, 'Кировоград', 15675676],
  [68435653, 56, 0, 'Користовка', 35675676],
  [68965464, 56, 90, 'Новоукраинка', 35675676],
  [69356782, 78, 125, 'Южноукраинская', 95675676],
  [77546312, 15, 0, 'Кременчуг', 85675676],
  [76346432, 66, 60, 'Полтава-Южна', 75675676],
  [78325643, 23, 90, 'Вознесенск', 55675676],
  [79443653, 81, 120, 'Новоукраинка', 55675676],
  [85674464, 95, 30, 'Южноукраинская', 15675676],
  [86456432, 17, 30, 'Павлыш', 74675676],
  [86423544, 17, 30, 'Полтава-Южна', 64675676],
  [97564334, 55, 0, 'Кировоград', 15675676],
  [93463243, 55, 60, 'Южноукраинская', 25675676],
];

const td = (cls, text = '', attr = '') => `<td class="${cls}"${attr}>${text}</td>`;
const empty = (n) => td('').repeat(n);

let html = '<colgroup><col style="width:26px">';
html += cols.map((c) => `<col style="width:${c[1]}px">`).join('') + '<col></colgroup>';

html += '<thead><tr><th class="corner"><svg width="9" height="9" viewBox="0 0 9 9"><path d="M9 0v9H0z" fill="#ddd"/></svg></th>';
html += cols.map((c) => `<th class="${c[0] === 'D' ? 'sel' : ''}">${c[0]}</th>`).join('');
html += '<th></th></tr></thead><tbody>';

html += '<tr><th>2</th>';
heads.forEach(([text, kind = ''], i) => {
  const thin = i === 6 || i === 7;
  html += td(`head k b2 ${thin ? '' : 'r2'}`, `<div class="clip"><div class="${kind}">${text}</div></div>`);
});
html += empty(8) + '</tr>';

html += '<tr class="row3"><th>3</th>' + td('k b2', '00(0)');
['00000000', '00', '000', '00000'].forEach((t) => { html += td('k b2 err', t); });
html += td('k b2 r2 err', '00000000') + td('k b2 r2 err num', '000', ' colspan="3"');
html += td('k b2 r2 num', '0') + td('k b2 err', '0000') + td('k b2 err', '000');
html += td('k b2 r2 err', '000000') + empty(8) + '</tr>';

rows.forEach((r, i) => {
  const [wagon, owner, mass, station, cargo, g = '', j = '', k = '', l = '', m = ''] = r;
  html += `<tr class="${i === 19 ? 'last' : ''}"><th>${i + 4}</th>`;
  html += td('k num', i + 1) + td('k num', wagon) + td('k num', owner);
  html += i ? td('k num', mass) : td('k num first-sel', mass + '<div class="ants"></div>');
  html += td('k', station) + td('k r2 num', cargo) + td('k r2 num', g, ' colspan="3"');
  html += td('k num', j) + td(k ? 'k mid err' : 'k', k) + td('k num', l) + td('k mid', m);
  html += empty(8) + '</tr>';
});

html += `<tr><th>24</th>${empty(21)}</tr><tr><th>25</th>${empty(21)}</tr>`;
html += '<tr><th>26</th>' + td('', 'Кол пломб', ' colspan="2"') + empty(1) + td('num err', '20') + empty(17) + '</tr>';
html += '<tr><th class="sel">27</th>' + td('', 'Общая масса', ' colspan="2"') + empty(1) + td('edit', '=СУММ(D4:D23)') + empty(17) + '</tr>';
html += `<tr><th></th>${empty(21)}</tr></tbody>`;

document.getElementById('grid').innerHTML = html;
```
